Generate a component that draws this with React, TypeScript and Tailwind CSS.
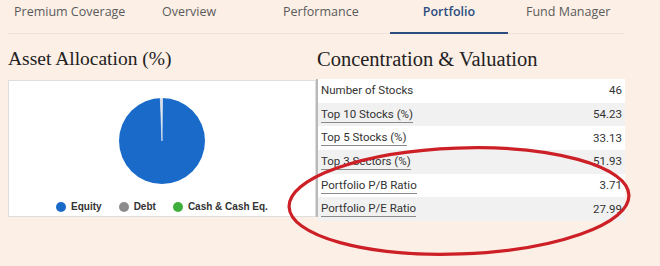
import React from 'react';

const tabs = ['Premium Coverage', 'Overview', 'Performance', 'Portfolio', 'Fund Manager'];

const rows = [
  { label: 'Number of Stocks', value: '46', plain: true },
  { label: 'Top 10 Stocks (%)', value: '54.23' },
  { label: 'Top 5 Stocks (%)', value: '33.13' },
  { label: 'Top 3 Sectors (%)', value: '51.93' },
  { label: 'Portfolio P/B Ratio', value: '3.71' },
  { label: 'Portfolio P/E Ratio', value: '27.99' },
];

function App() {
  return (
    <div className="relative w-[660px] h-[266px] overflow-hidden bg-[#fcefe6] font-['Open_Sans',sans-serif]">
      {/* Tabs */}
      <div className="flex h-[34px] mx-2 w-[616px] border-b border-[#ece3dc] text-[12.5px] text-[#5b5b5b]">
        <div className="pl-[6px] w-[148px] pt-[3px]">{tabs[0]}</div>
        <div className="w-[120px] pl-[6px] pt-[3px]">{tabs[1]}</div>
        <div className="w-[114px] pl-[7px] pt-[3px]">{tabs[2]}</div>
        <div className="w-[118px] -mb-px border-b-2 border-[#2d4d7f] text-center font-semibold text-[#2d4d7f] pt-[3px]">{tabs[3]}</div>
        <div className="pl-[18px] pt-[3px]">{tabs[4]}</div>
      </div>

      <div className="flex px-2 pt-[13px]">
        {/* Asset allocation */}
        <div className="w-[308px]">
          <h2 className="font-['Liberation_Serif',serif] text-[19.5px] leading-[24px] text-[#222] mb-[9px]">Asset Allocation (%)</h2>
          <div className="h-[137px] bg-white border border-[#dedede] flex flex-col items-center pt-[16px]">
            <svg width="88" height="88" viewBox="0 0 88 88">
              <circle cx="44" cy="44" r="43" fill="#1a6bc9" />
              <path d="M44 44 L42.3 1.03 A43 43 0 0 1 44.5 1 Z" fill="#dcdcdc" stroke="#ffffff" strokeWidth="0.6" />
            </svg>
            <div className="flex items-center gap-[17px] mt-[14px] text-[10px] font-bold text-[#333] font-['Liberation_Sans',sans-serif]">
              <span className="flex items-center gap-[5px]"><span className="w-[10px] h-[10px] rounded-full bg-[#1a6bc9]" />Equity</span>
              <span className="flex items-center gap-[5px]"><span className="w-[10px] h-[10px] rounded-full bg-[#8c8c8c]" />Debt</span>
              <span className="flex items-center gap-[5px]"><span className="w-[10px] h-[10px] rounded-full bg-[#3fae3a]" />Cash &amp; Cash Eq.</span>
            </div>
          </div>
        </div>

        {/* Concentration */}
        <div className="w-[310px]">
          <h2 className="pl-[1px] font-['Liberation_Serif',serif] text-[20.5px] leading-[24px] text-[#222] mb-[8px]">Concentration &amp; Valuation</h2>
          <div className="flex">
            <div className="w-[2px] h-[138px] bg-[#b9b9b9]" />
            <div className="w-[307px] font-['Roboto',sans-serif] text-[11.5px] text-[#333]">
              {rows.map((r, i) => (
                <div key={r.label} className={`flex items-center justify-between h-[23.7px] pl-[3px] pr-[3px] ${i % 2 ? 'bg-[#f1f1f1]' : 'bg-white'}`}>
                  <span className={r.plain ? '' : 'border-b border-[#8a8a8a] leading-[15px]'}>{r.label}</span>
                  <span>{r.value}</span>
                </div>
              ))}
            </div>
          </div>
        </div>
      </div>

      {/* hand-drawn annotation */}
      <svg className="absolute left-0 top-0 pointer-events-none" width="660" height="266">
        <ellipse cx="459" cy="201" rx="170" ry="53" transform="rotate(-2 459 201)" fill="none" stroke="#cc1f26" strokeWidth="3.2" />
      </svg>
    </div>
  );
}

export default App;
